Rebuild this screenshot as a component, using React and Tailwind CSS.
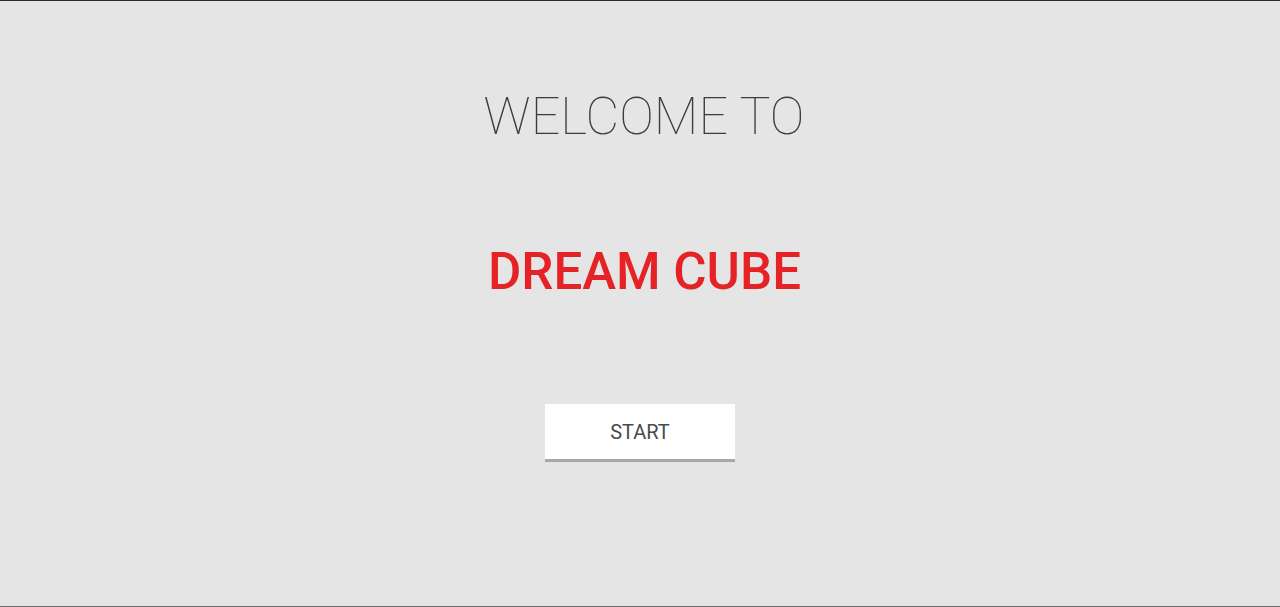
import React from 'react';

const App = () => {
    const font = {fontFamily: 'Roboto, "Noto Sans", sans-serif'};

    return (
        <div
            className="flex h-[607px] w-full flex-col items-center border-t border-b border-t-[#2a2a2a] border-b-[#6b6b6b] bg-[#e5e5e5]"
            style={font}>
            <h1 className="mt-[80px] pl-[8px] text-[52px] leading-[72px] font-thin text-[#3c3c3c]">WELCOME TO</h1>
            <h2 className="mt-[83px] pl-[9px] text-[51px] leading-[72px] font-medium text-[#e52225]">DREAM CUBE</h2>
            <button
                type="button"
                className="mt-[96px] h-[58px] w-[190px] border-b-[3px] border-b-[#a8a8a8] bg-white text-[20px] text-[#4a4a4a]">
                START
            </button>
        </div>
    );
};

export default App;
